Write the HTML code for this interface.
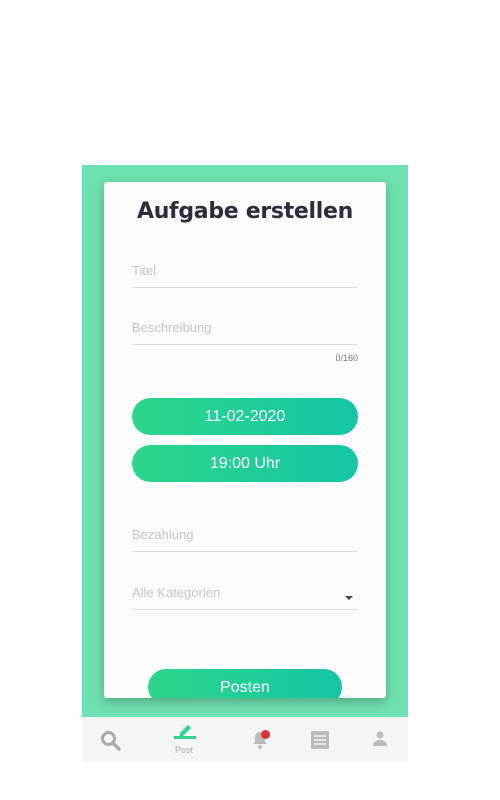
<!DOCTYPE html>
<html><head><style>
body{margin:0;width:500px;height:800px;background:#fff;position:relative;font-family:"Liberation Sans","DejaVu Sans",sans-serif;overflow:hidden}
.bg{position:absolute;left:82px;top:165px;width:326px;height:552px;background:#6fe0b0}
.card{position:absolute;left:104px;top:182px;width:282px;height:516px;background:#fdfdfd;border-radius:3px;box-shadow:0 4px 10px rgba(0,0,0,.25);overflow:hidden}
h1{position:absolute;left:104px;width:282px;top:199px;margin:0;text-align:center;font-size:22px;font-weight:bold;color:#2b2c3c;font-family:"DejaVu Sans",sans-serif;letter-spacing:-0.3px}
.f{position:absolute;left:132px;width:226px;border-bottom:1px solid #ddd;color:#c4c4cc;font-size:13px;padding-bottom:9px}
.btn{position:absolute;left:132px;width:226px;height:37px;border-radius:19px;background:linear-gradient(90deg,#2dd68a,#14c6a6);color:#fff;text-align:center;line-height:37px;font-size:16px}
.nav{position:absolute;left:82px;top:717px;width:326px;height:45px;background:#f5f5f5}
</style></head><body>
<div class="bg"></div>
<div class="card"></div>
<h1>Aufgabe erstellen</h1>
<div class="f" style="top:263px">Titel</div>
<div class="f" style="top:320px">Beschreibung</div>
<div style="position:absolute;left:320px;width:38px;top:353px;text-align:right;font-size:9px;color:#777">0/160</div>
<div class="btn" style="top:398px">11-02-2020</div>
<div class="btn" style="top:445px">19:00 Uhr</div>
<div class="f" style="top:527px">Bezahlung</div>
<div class="f" style="top:585px">Alle Kategorien</div>
<div style="position:absolute;left:345px;top:596px;border-left:4px solid transparent;border-right:4px solid transparent;border-top:4px solid #444"></div>
<div style="position:absolute;left:104px;top:660px;width:282px;height:38px;overflow:hidden"><div class="btn" style="left:44px;top:9px;width:194px;height:36px;line-height:38px;font-size:16px">Posten</div></div>
<div class="nav">
<svg style="position:absolute;left:18px;top:13px" width="22" height="22" viewBox="0 0 22 22"><circle cx="8.5" cy="8.5" r="6" fill="none" stroke="#aaa" stroke-width="3"/><path d="M13 13l6 6" stroke="#aaa" stroke-width="3.5" stroke-linecap="round"/></svg>
<svg style="position:absolute;left:92px;top:6px" width="22" height="16" viewBox="0 0 22 16"><path d="M6 10l8-8 3 3-8 8H6z" fill="#2dd68a"/><rect x="0" y="13" width="22" height="3" fill="#2dd68a"/></svg>
<div style="position:absolute;left:93px;top:28px;font-size:9px;color:#aaa">Post</div>
<svg style="position:absolute;left:170px;top:14px" width="16" height="18" viewBox="0 0 16 18"><path d="M8 1c-3 0-5 2.5-5 5v5l-2 2h14l-2-2V6c0-2.5-2-5-5-5z" fill="#bbb"/><circle cx="8" cy="16" r="2" fill="#bbb"/></svg>
<div style="position:absolute;left:179px;top:13px;width:9px;height:9px;border-radius:50%;background:#e53030"></div>
<svg style="position:absolute;left:229px;top:14px" width="18" height="18" viewBox="0 0 18 18"><rect width="18" height="18" rx="1" fill="#bbb"/><path d="M3 5h12M3 9h12M3 13h12" stroke="#f5f5f5" stroke-width="1.5"/></svg>
<svg style="position:absolute;left:290px;top:14px" width="16" height="16" viewBox="0 0 16 16"><circle cx="8" cy="4" r="3.5" fill="#bbb"/><path d="M1 15c0-4 3-6 7-6s7 2 7 6z" fill="#bbb"/></svg>
</div>
</body></html>
